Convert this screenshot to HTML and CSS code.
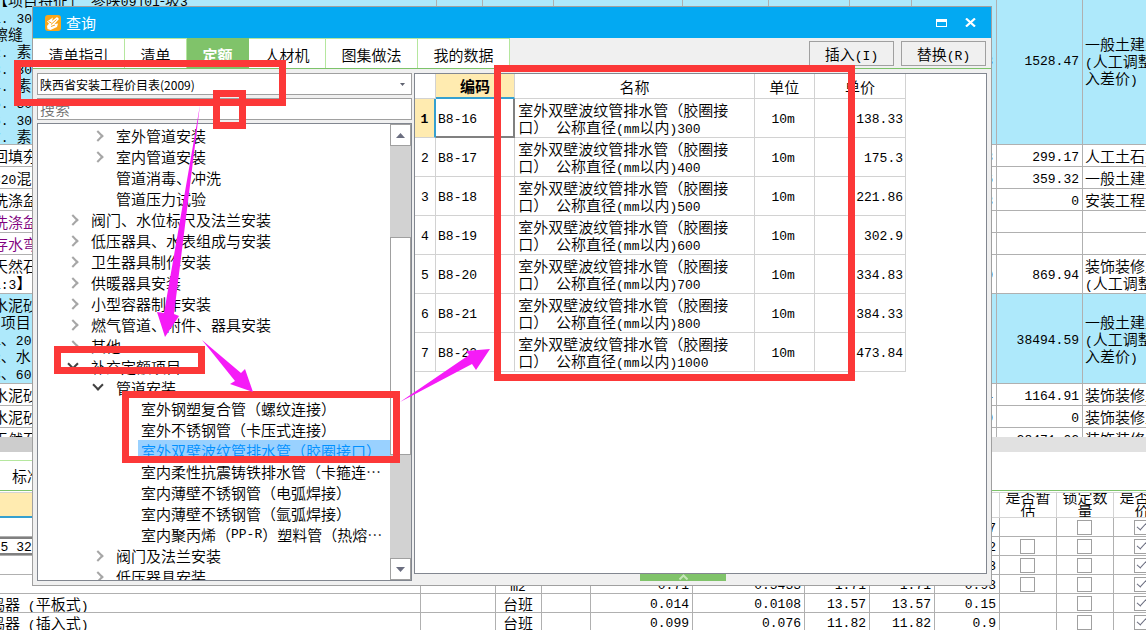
FILE: index.html
```html
<!DOCTYPE html>
<html lang="zh-CN">
<head>
<meta charset="utf-8">
<title>查询</title>
<link rel="stylesheet" href="styles.css">
</head>
<body>
<main class="app">
  <section class="bill">
    <table class="grid bill-table">
      <colgroup><col class="w-feature"><col class="w-46"><col class="w-71"><col class="w-129"><col class="w-86"><col class="w-81"><col class="w-62"><col class="w-85"><col class="w-86"><col></colgroup>
      <tbody>
        <tr class="row-tall blue"><td class="feature low">【项目特征」<i>&nbsp;</i>参陕<i>09j01</i>-坡<i>3</i><br><i>1. 30</i><br>擦缝<br><i>2. </i>素<br><i>3. 30</i><br><i>4. </i>素<br><i>5. 30</i><br><i>6. 30</i><br><i>7. </i>素</td><td></td><td></td><td></td><td></td><td></td><td></td><td class="num">10.28</td><td class="num">1528.47</td><td class="kind">一般土建工程<br><i>(</i>人工调整计<br>入差价<i>)</i></td></tr>
        <tr class="row"><td class="feature">回填夯实</td><td></td><td></td><td></td><td></td><td></td><td></td><td class="num">22.8</td><td class="num">299.17</td><td class="kind">人工土石方</td></tr>
        <tr class="row"><td class="feature"><i>C20</i>混凝土</td><td></td><td></td><td></td><td></td><td></td><td></td><td class="num">4.6</td><td class="num">359.32</td><td class="kind">一般土建工程</td></tr>
        <tr class="row"><td class="feature">洗涤盆</td><td></td><td></td><td></td><td></td><td></td><td></td><td class="num">8</td><td class="num">0</td><td class="kind">安装工程</td></tr>
        <tr class="row"><td class="feature purple">洗涤盆</td><td></td><td></td><td></td><td></td><td></td><td></td><td></td><td></td><td></td></tr>
        <tr class="row"><td class="feature purple">存水弯</td><td></td><td></td><td></td><td></td><td></td><td></td><td></td><td></td><td></td></tr>
        <tr class="row-two"><td class="feature">天然石材<br><i>1:3</i>】</td><td></td><td></td><td></td><td></td><td></td><td></td><td class="num">84.0</td><td class="num">869.94</td><td class="kind">装饰装修工程<br><i>(</i>人工调整</td></tr>
        <tr class="row-five blue"><td class="feature">水泥砂浆<br><i>&nbsp;</i>项目<br><i>1</i>、<i>20</i><br><i>2</i>、水<br><i>3</i>、<i>60</i></td><td></td><td></td><td></td><td></td><td></td><td></td><td></td><td class="num">38494.59</td><td class="kind">一般土建工程<br><i>(</i>人工调整计<br>入差价<i>)</i></td></tr>
        <tr class="row"><td class="feature">水泥砂浆</td><td></td><td></td><td></td><td></td><td></td><td></td><td class="num">14</td><td class="num">1164.91</td><td class="kind">装饰装修工程</td></tr>
        <tr class="row"><td class="feature">水泥砂浆</td><td></td><td></td><td></td><td></td><td></td><td></td><td class="num">0</td><td class="num">0</td><td class="kind">装饰装修工程</td></tr>
        <tr class="row"><td class="feature">天然石材</td><td></td><td></td><td></td><td></td><td></td><td></td><td></td><td class="num">28471.02</td><td class="kind">装饰装修工程</td></tr>
      </tbody>
    </table>
  </section>
  <div class="hscroll"><div class="hthumb"></div></div>
  <nav class="lower-tabs"><button type="button">标准换算</button></nav>
  <section class="lower">
    <table class="grid lower-table">
      <colgroup><col class="w-421"><col class="w-75"><col class="w-46"><col class="w-49"><col class="w-102"><col class="w-112"><col class="w-65"><col class="w-65"><col class="w-65"><col class="w-57"><col class="w-57"><col class="w-57"></colgroup>
      <thead><tr><th class="picked"></th><th></th><th></th><th></th><th></th><th></th><th></th><th></th><th></th><th><div class="two">是否暂<br>估</div></th><th><div class="two">锁定数<br>量</div></th><th><div class="two">是否计<br>价</div></th></tr></thead>
      <tbody>
        <tr><td></td><td></td><td></td><td></td><td></td><td></td><td></td><td></td><td class="num">0.37</td><td></td><td class="mid"><input type="checkbox" aria-label="锁定数量"></td><td class="mid"><input type="checkbox" aria-label="计价" checked></td></tr>
        <tr><td class="code focus">325 32.5</td><td></td><td></td><td></td><td></td><td></td><td></td><td></td><td class="num">0.32</td><td class="mid"><input type="checkbox" aria-label="是否暂估"></td><td class="mid"><input type="checkbox" aria-label="锁定数量"></td><td class="mid"><input type="checkbox" aria-label="计价" checked></td></tr>
        <tr><td></td><td></td><td></td><td></td><td></td><td></td><td></td><td></td><td class="num">0.03</td><td class="mid"><input type="checkbox" aria-label="是否暂估"></td><td class="mid"><input type="checkbox" aria-label="锁定数量"></td><td class="mid"><input type="checkbox" aria-label="计价" checked></td></tr>
        <tr><td></td><td></td><td class="mid"><i>m2</i></td><td></td><td class="num">0.71</td><td class="num">0.5433</td><td class="num">1.71</td><td class="num">1.71</td><td class="num">0.93</td><td class="mid"><input type="checkbox" aria-label="是否暂估"></td><td class="mid"><input type="checkbox" aria-label="锁定数量"></td><td class="mid"><input type="checkbox" aria-label="计价" checked></td></tr>
        <tr><td class="machine">振捣器<i>&nbsp;(</i>平板式<i>)</i></td><td></td><td class="mid">台班</td><td></td><td class="num">0.014</td><td class="num">0.0108</td><td class="num">13.57</td><td class="num">13.57</td><td class="num">0.15</td><td></td><td class="mid"><input type="checkbox" aria-label="锁定数量"></td><td class="mid"><input type="checkbox" aria-label="计价" checked></td></tr>
        <tr><td class="machine">振捣器<i>&nbsp;(</i>插入式<i>)</i></td><td></td><td class="mid">台班</td><td></td><td class="num">0.099</td><td class="num">0.076</td><td class="num">11.82</td><td class="num">11.82</td><td class="num">0.9</td><td></td><td class="mid"><input type="checkbox" aria-label="锁定数量"></td><td class="mid"><input type="checkbox" aria-label="计价" checked></td></tr>
      </tbody>
    </table>
  </section>
</main>

<div class="dialog" role="dialog" aria-label="查询">
  <header class="titlebar">
    <svg class="logo" viewBox="0 0 16 16" aria-hidden="true"><rect width="16" height="16" rx="3" fill="#f9a61a"/><path d="M2 6.500 8 2.500 7 6l5-4 2 2-4.500 5 3.500-.5-1 3.500-6.500 3-3-1-.5-3 2-2.500Z" fill="#fff"/><path d="M6 9.500 11.500 4.500M3.500 6.500 6.500 8M6 11.500 10 10" stroke="#f9a61a" fill="none"/></svg>
    <h1>查询</h1>
    <button type="button" class="win" aria-label="最大化"><svg viewBox="0 0 11 8" width="11" height="8"><path d="M0 0h11v8H0ZM1 3v4h9V3Z" fill="#fff" fill-rule="evenodd"/></svg></button>
    <button type="button" class="win" aria-label="关闭"><svg viewBox="0 0 11 9" width="11" height="9"><path d="M1 .5 10 8.500M10 .5 1 8.500" stroke="#fff" stroke-width="2.200" fill="none"/></svg></button>
  </header>
  <div class="toolbar">
    <nav class="tabs">
      <button type="button" class="t-wide">清单指引</button><button type="button" class="t-small">清单</button><button type="button" class="t-small active">定额</button><button type="button" class="t-mid">人材机</button><button type="button" class="t-wide">图集做法</button><button type="button" class="t-wide">我的数据</button>
    </nav>
    <div class="actions"><button type="button">插入<i>(I)</i></button><button type="button">替换<i>(R)</i></button></div>
  </div>
  <div class="panes">
    <aside class="left">
      <div class="combo"><select aria-label="定额库"><option>陕西省安装工程价目表(2009)</option></select><svg viewBox="0 0 5 3" width="5" height="3" aria-hidden="true"><path d="M0 0h5L2.500 3Z" fill="#5f6270"/></svg></div>
      <input class="search" type="text" placeholder="搜索" aria-label="搜索">
      <div class="treebox">
        <ul class="tree">
          <li class="l3 shut">室外管道安装</li>
          <li class="l3 shut">室内管道安装</li>
          <li class="l3">管道消毒、冲洗</li>
          <li class="l3">管道压力试验</li>
          <li class="l2 shut">阀门、水位标尺及法兰安装</li>
          <li class="l2 shut">低压器具、水表组成与安装</li>
          <li class="l2 shut">卫生器具制作安装</li>
          <li class="l2 shut">供暖器具安装</li>
          <li class="l2 shut">小型容器制作安装</li>
          <li class="l2 shut">燃气管道、附件、器具安装</li>
          <li class="l2 shut">其他</li>
          <li class="l2 open">补充定额项目</li>
          <li class="l3 open">管道安装</li>
          <li class="l4">室外钢塑复合管（螺纹连接）</li>
          <li class="l4">室外不锈钢管（卡压式连接）</li>
          <li class="l4 chosen"><span>室外双壁波纹管排水管（胶圈接口）</span></li>
          <li class="l4">室内柔性抗震铸铁排水管（卡箍连…</li>
          <li class="l4">室内薄壁不锈钢管（电弧焊接）</li>
          <li class="l4">室内薄壁不锈钢管（氩弧焊接）</li>
          <li class="l4">室内聚丙烯（<i>PP-R</i>）塑料管（热熔…</li>
          <li class="l3 shut">阀门及法兰安装</li>
          <li class="l3 shut">低压器具安装</li>
        </ul>
        <div class="vscroll">
          <button type="button" aria-label="向上"><svg viewBox="0 0 9 5" width="9" height="5"><path d="M0 5h9L4.500 0Z" fill="#6b6e80"/></svg></button>
          <div class="track"><div class="thumb"></div></div>
          <button type="button" aria-label="向下"><svg viewBox="0 0 9 5" width="9" height="5"><path d="M0 0h9L4.500 5Z" fill="#6b6e80"/></svg></button>
        </div>
      </div>
    </aside>
    <section class="right">
      <div class="result">
        <table class="items">
          <colgroup><col class="w-21"><col class="w-79"><col class="w-239"><col class="w-60"><col class="w-91"></colgroup>
          <thead><tr><th></th><th class="picked">编码</th><th>名称</th><th>单位</th><th>单价</th></tr></thead>
          <tbody>
            <tr><th class="here">1</th><td class="code cell">B8-16</td><td class="name">室外双壁波纹管排水管（胶圈接<br>口）<i>&nbsp;</i>公称直径<i>(mm</i>以内<i>)300</i></td><td class="unit">10m</td><td class="num">138.33</td></tr>
            <tr><th>2</th><td class="code">B8-17</td><td class="name">室外双壁波纹管排水管（胶圈接<br>口）<i>&nbsp;</i>公称直径<i>(mm</i>以内<i>)400</i></td><td class="unit">10m</td><td class="num">175.3</td></tr>
            <tr><th>3</th><td class="code">B8-18</td><td class="name">室外双壁波纹管排水管（胶圈接<br>口）<i>&nbsp;</i>公称直径<i>(mm</i>以内<i>)500</i></td><td class="unit">10m</td><td class="num">221.86</td></tr>
            <tr><th>4</th><td class="code">B8-19</td><td class="name">室外双壁波纹管排水管（胶圈接<br>口）<i>&nbsp;</i>公称直径<i>(mm</i>以内<i>)600</i></td><td class="unit">10m</td><td class="num">302.9</td></tr>
            <tr><th>5</th><td class="code">B8-20</td><td class="name">室外双壁波纹管排水管（胶圈接<br>口）<i>&nbsp;</i>公称直径<i>(mm</i>以内<i>)700</i></td><td class="unit">10m</td><td class="num">334.83</td></tr>
            <tr><th>6</th><td class="code">B8-21</td><td class="name">室外双壁波纹管排水管（胶圈接<br>口）<i>&nbsp;</i>公称直径<i>(mm</i>以内<i>)800</i></td><td class="unit">10m</td><td class="num">384.33</td></tr>
            <tr><th>7</th><td class="code">B8-22</td><td class="name">室外双壁波纹管排水管（胶圈接<br>口）<i>&nbsp;</i>公称直径<i>(mm</i>以内<i>)1000</i></td><td class="unit">10m</td><td class="num">473.84</td></tr>
          </tbody>
        </table>
      </div>
      <button type="button" class="handle" aria-label="展开"><svg viewBox="0 0 9 6" width="9" height="6"><path d="M.5 5.500 4.500 1.500 8.500 5.500" stroke="#c5e6b8" stroke-width="2" fill="none"/></svg></button>
    </section>
  </div>
</div>

<svg class="marks" width="1146" height="630" viewBox="0 0 1146 630" aria-hidden="true">
  <g fill="none" stroke="#fc3838" stroke-width="7">
    <rect x="17.500" y="63.500" width="265" height="39"/>
    <rect x="216.500" y="93.500" width="26" height="32"/>
    <rect x="497.500" y="68.500" width="354" height="309"/>
    <rect x="57.500" y="349.500" width="144" height="21"/>
    <rect x="125.500" y="394.500" width="271" height="65"/>
  </g>
  <g fill="#f51bf7">
    <path d="M200 105 164 313 157 312 165 337 179 316 174 314Z"/>
    <path d="M202 340 241 373 245 369 253 392 230 384 235 381Z"/>
    <path d="M400 402 469 355 466 351 490 349 476 370 472 364Z"/>
  </g>
</svg>
</body>
</html>
```

FILE: styles.css
```css
*, *::before, *::after { box-sizing: border-box; }
body {
  margin: 0;
  overflow: hidden;
  background: #fff;
  color: #000;
  font: 350 15px/17px "Noto Sans CJK SC", sans-serif;
}
button, input, select { font: inherit; color: inherit; margin: 0; padding: 0; border: 0; border-radius: 0; }
i, .num, .code, .unit {
  font-family: "Liberation Mono", monospace;
  font-size: 13px;
  font-style: normal;
}
i { line-height: 0; }

/* background estimate sheets */
.bill { height: 437px; overflow: hidden; }
.grid, .items { border-collapse: separate; border-spacing: 0; table-layout: fixed; }
.grid td, .grid th { padding: 0 3px; border-right: 1px solid #b0b0b0; border-bottom: 1px solid #b0b0b0; white-space: nowrap; overflow: hidden; font-weight: inherit; }
.bill-table { width: calc(100% + 20px); margin: -24px 0 0 -7px; }
.blue td { background: #aee9fb; }
.row-tall { height: 169px; }
.row { height: 22px; }
.row-two { height: 39px; }
.row-five { height: 90px; }
.grid .feature { padding: 0; }
.grid .low { vertical-align: bottom; }
.grid .kind { padding: 0 2px; }
.w-feature { width: 444px; }
.purple { color: #800080; }
.num { text-align: right; }
.grid .num, .grid .code { padding-top: 3px; }
.hscroll { height: 15px; background: #e1e1e1; }
.hthumb { width: 60%; height: 100%; background: #cdcdcd; }
.lower-tabs { height: 41px; padding-top: 8px; border-bottom: 1px solid #d4d4d4; }
.lower-tabs button { display: block; width: 100%; height: 31px; padding-left: 12px; text-align: left; background: linear-gradient(90deg, #b5e79e 50%, #fff 50%) top / 100% 1px no-repeat #fff; border-bottom: 1px solid #7dc36a; }
.lower { overflow: hidden; }
.lower-table { width: 1171px; }
.lower-table tr { height: 19px; }
.lower-table thead tr { height: 25px; }
.grid th { padding: 0; border-color: #d4d4d4; }
.lower-table .picked { background: #ffebb0; border-bottom: 2px solid #35a0d0; }
.lower-table td { line-height: 15px; }
.two { height: 24px; padding-bottom: 3px; display: flex; align-items: center; justify-content: center; line-height: 14px; overflow: hidden; }
.grid .mid { text-align: center; padding: 0 1px 0 0; }
.grid .focus { padding-left: 0; text-indent: -15px; box-shadow: inset 0 2px #808080, inset 0 -2px #808080; }
.grid .machine { text-indent: -28px; }
input[type="checkbox"] { appearance: none; display: block; width: 15px; height: 15px; margin: auto; border: 1px solid #a0a0a0; background: #fff; }
input[type="checkbox"]:checked::after { content: ""; display: block; width: 5px; height: 9px; margin: 0 0 0 4px; border: solid #6b6e80; border-width: 0 1px 1px 0; transform: rotate(42deg); }

/* query window */
.dialog { position: absolute; left: 32px; top: 6px; width: 960px; height: 580px; display: flex; flex-direction: column; border: 1px solid #a0a0a0; background: #f0f0f0; }
.titlebar { flex: none; height: 31px; display: flex; align-items: center; gap: 5px; padding: 0 15px 0 12px; background: #03a9f2; color: #fff; }
.logo { width: 16px; height: 16px; }
.titlebar h1 { flex: 1; margin: 0; font-size: 15px; font-weight: 400; }
.win { display: flex; align-items: center; justify-content: center; width: 12px; height: 20px; background: none; }
.win + .win { margin-left: 12px; }
.toolbar { flex: none; height: 31px; display: flex; justify-content: space-between; border-bottom: 1px solid #7dc36a; }
.tabs { display: flex; }
.tabs button { height: 30px; padding-top: 2px; background: #fff; border-top: 1px solid #b5e79e; border-right: 1px solid #b5e79e; }
.t-wide { width: 92px; }
.t-mid { width: 77px; }
.t-small { width: 62px; }
.tabs .active { background: #80c36a; border-color: #80c36a; color: #fff; font-weight: 700; }
.actions { display: flex; gap: 7px; padding: 3px 5px 2px; }
.actions button { width: 85px; background: #f0f0f0; border: 1px solid #a0a0a0; }
.panes { flex: 1; min-height: 0; display: flex; gap: 2px; padding: 4px; }
.left { width: 375px; display: flex; flex-direction: column; gap: 3px; }
.combo { display: flex; align-items: center; height: 22px; padding-right: 6px; background: #fff; border: 1px solid #a0a0a0; }
.combo select { flex: 1; height: 20px; padding-left: 2px; appearance: none; background: none; font-size: 12px; font-weight: 400; }
.search { width: 100%; height: 22px; padding: 0 2px 2px; background: #fff; border: 1px solid #a0a0a0; }
.search::placeholder { color: #707070; opacity: 1; }
.treebox { flex: 1; min-height: 0; display: flex; background: #fff; border: 1px solid #828790; }
.tree { flex: 1; min-width: 0; margin: 0; padding: 1px 0 0; list-style: none; overflow: hidden; }
.tree li { display: flex; align-items: center; height: 21px; white-space: nowrap; }
.tree li::before { content: ""; flex: none; width: 8px; height: 8px; margin-right: 14px; }
.tree .l2 { padding-left: 31px; }
.tree .l3 { padding-left: 56px; }
.tree .l4 { padding-left: 81px; }
.tree .shut::before { border: solid #a6a6a6; border-width: 2px 2px 0 0; transform: rotate(45deg); }
.tree .open::before { margin-top: -6px; border: solid #404040; border-width: 0 2px 2px 0; transform: rotate(45deg); }
.chosen { background: linear-gradient(#99d1ff, #99d1ff) right / calc(100% - 100px) 100% no-repeat; color: #0090ff; }
.vscroll { width: 21px; display: flex; flex-direction: column; background: #d2d2d2; }
.vscroll button { flex: none; height: 22px; display: flex; align-items: center; justify-content: center; background: #fff; border: 1px solid #a0a0a0; }
.track { flex: 1; padding-top: 91px; }
.thumb { height: 218px; background: #fff; border: 1px solid #a0a0a0; }
.right { flex: 1; min-width: 0; display: flex; flex-direction: column; align-items: center; }
.result { width: 100%; flex: 1; min-height: 0; overflow: hidden; background: #fff; border: 1px solid #828790; }
.handle { width: 86px; height: 7px; margin-right: 35px; display: flex; justify-content: center; background: #80c36a; }
.items { width: 491px; }
.items th, .items td { padding: 0; border-right: 1px solid #d2d2d2; border-bottom: 1px solid #d2d2d2; font-weight: inherit; }
.items thead tr { height: 25px; }
.items tbody tr { height: 39px; }
.items tbody th { font-family: "Liberation Mono", monospace; font-size: 13px; padding-top: 2px; }
.items .picked { background: #ffebb0; font-weight: 700; border-bottom: 2px solid #35a0d0; }
.items .here { background: #ffebb0; font-weight: 700; border-right: 2px solid #35a0d0; }
.items .code { padding: 3px 0 0 2px; }
.items .name { padding-left: 3px; }
.items .cell { border-right: 2px solid #808080; border-bottom: 2px solid #808080; }
.items .unit { padding: 3px 2px 0 0; text-align: center; }
.items .num { padding: 3px 2px 0 0; }

.w-21 { width: 21px; }
.w-46 { width: 46px; }
.w-49 { width: 49px; }
.w-57 { width: 57px; }
.w-60 { width: 60px; }
.w-62 { width: 62px; }
.w-65 { width: 65px; }
.w-71 { width: 71px; }
.w-75 { width: 75px; }
.w-79 { width: 79px; }
.w-81 { width: 81px; }
.w-85 { width: 85px; }
.w-86 { width: 86px; }
.w-91 { width: 91px; }
.w-102 { width: 102px; }
.w-112 { width: 112px; }
.w-129 { width: 129px; }
.w-239 { width: 239px; }
.w-421 { width: 421px; }

/* callouts drawn over the window */
.marks { position: absolute; left: 0; top: 0; pointer-events: none; }
```
